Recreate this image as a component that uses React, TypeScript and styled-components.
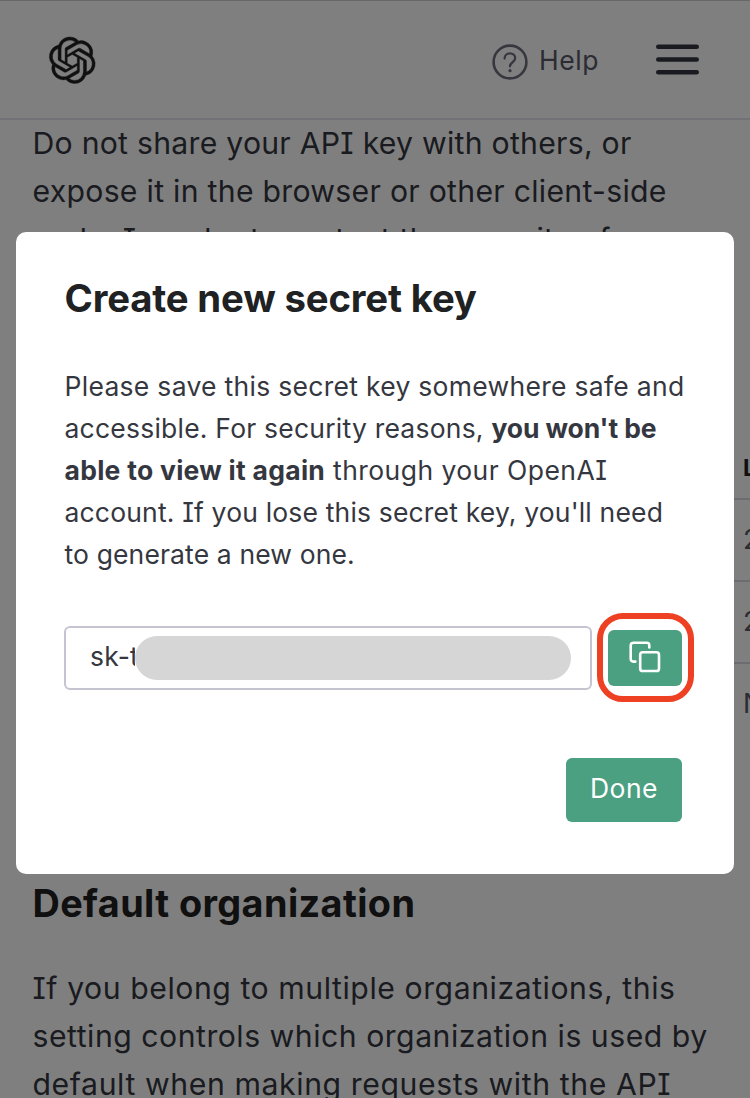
import React from "react";
import styled, { createGlobalStyle } from "styled-components";
import { SiOpenai } from "react-icons/si";

const GlobalStyle = createGlobalStyle`
  * { box-sizing: border-box; }
  body { margin: 0; background: #fff; }
`;

const Page = styled.div`
  position: relative;
  width: 750px;
  height: 1098px;
  overflow: hidden;
  background: #fff;
  color: #353740;
  font-family: Inter, "Liberation Sans", sans-serif;
  font-feature-settings: "cv08" 1;
`;

const Header = styled.header`
  display: flex;
  align-items: center;
  height: 120px;
  padding: 0 51px 0 48.5px;
  border-top: 1px solid #d0d0d4;
  border-bottom: 2px solid #e2e2ec;
`;

const Logo = styled(SiOpenai)`
  width: 46.5px;
  height: 46.5px;
  margin-top: 1px;
  color: #202123;
  stroke: #202123;
  stroke-width: 0.22px;
  overflow: visible;
`;

const HelpLink = styled.a`
  display: flex;
  align-items: center;
  gap: 11px;
  margin-left: auto;
  margin-right: 57px;
  color: #6e6e80;
  font-size: 26.5px;
  line-height: 36px;
`;

const HelpLabel = styled.span`
  color: #565869;
  letter-spacing: 0.55px;
`;

const HelpGlyph = styled.svg`
  margin-top: 4px;
`;

const Main = styled.main`
  padding: 0 0 0 32.5px;
`;

const Copy = styled.p`
  margin: -1px 0 0;
  font-size: 30.2px;
  line-height: 48px;
  color: #353740;
`;

const Line = styled.span<{ $track?: number }>`
  display: block;
  width: max-content;
  white-space: nowrap;
  letter-spacing: ${(p) => p.$track ?? 0}px;
`;

const Strong = styled.b<{ $track?: number }>`
  letter-spacing: ${(p) => p.$track ?? 0}px;
`;

const KeyTable = styled.div`
  display: grid;
  grid-auto-rows: 82px;
  height: 498px;
  margin: 155px 0 0;
  width: 900px;
`;

const KeyRow = styled.div<{ $head?: boolean }>`
  display: flex;
  align-items: center;
  justify-content: flex-end;
  border-bottom: 2px solid #d9d9e3;
  color: ${(p) => (p.$head ? "#202123" : "#565869")};
  font-size: ${(p) => (p.$head ? 23 : 27)}px;
  font-weight: ${(p) => (p.$head ? 700 : 400)};
  padding-top: ${(p) => (p.$head ? 19 : 0)}px;
  padding-bottom: ${(p) => (p.$head ? 0 : 1)}px;
  &:last-child { border-bottom: 0; padding-bottom: 3px; }
`;

const KeyCell = styled.span`
  width: 189.5px;
`;

const SectionTitle = styled.h2`
  margin: 0;
  font-size: 37.8px;
  line-height: 48px;
  font-weight: 700;
  color: #202123;
`;

const Section = styled.section`
  display: grid;
  gap: 38px;
  margin-top: -37px;
`;

const Overlay = styled.div`
  position: absolute;
  inset: 0;
  padding: 232px 16px 0;
  background: rgba(0, 0, 0, 0.5);
`;

const Dialog = styled.div`
  height: 642px;
  padding: 40px 48px 0 48.5px;
  border-radius: 10px;
  background: #fff;
`;

const DialogTitle = styled.h1`
  margin: 0 0 41px;
  font-size: 38.3px;
  line-height: 52px;
  font-weight: 700;
  color: #202123;
`;

const DialogText = styled.p`
  margin: 0;
  font-size: 26.5px;
  line-height: 42px;
  color: #353740;
`;

const KeyForm = styled.div`
  display: flex;
  align-items: center;
  gap: 5px;
  width: 630px;
  height: 90px;
  margin: 38px 0 0 -0.5px;
`;

const KeyField = styled.div`
  display: flex;
  align-items: center;
  width: 528px;
  height: 64px;
  padding-left: 24px;
  border: 2px solid #c5c5d2;
  border-radius: 6px;
  color: #353740;
  font-size: 26.5px;
`;

const KeyPrefix = styled.span`
  width: 45px;
  overflow: hidden;
  line-height: 36px;
  padding-bottom: 4px;
  letter-spacing: 0.2px;
  white-space: nowrap;
`;

const Redaction = styled.span`
  width: 436px;
  height: 44px;
  border-radius: 22px;
  background: #d6d6d6;
`;

const Highlight = styled.div`
  width: 97px;
  height: 89px;
  margin-bottom: 1px;
  padding: 11px 5px 10px;
  border: 6px solid #ee4023;
  border-radius: 26px;
`;

const CopyButton = styled.button`
  display: flex;
  align-items: center;
  justify-content: center;
  width: 74px;
  height: 56px;
  padding: 0 0 2px;
  border: 0;
  border-radius: 6px;
  background: #4aa081;
`;

const Actions = styled.div`
  display: flex;
  justify-content: flex-end;
  padding: 55px 4px 0 0;
`;

const DoneButton = styled.button`
  width: 116px;
  height: 64px;
  padding: 0 0 4px;
  border: 0;
  border-radius: 6px;
  background: #4aa081;
  color: #fff;
  font: 400 26.5px/36px Inter, "Liberation Sans", sans-serif;
  letter-spacing: 0.5px;
`;

const HelpIcon = () => (
  <HelpGlyph width="36" height="36" viewBox="0 0 36 36" fill="none" stroke="currentColor" strokeLinecap="round">
    <circle cx="18" cy="18" r="16.4" strokeWidth="2.6" />
    <path d="M12.6 14.6c0-3.2 2.3-5.2 5.3-5.2s5.3 1.9 5.3 4.7c0 2.3-1.3 3.3-2.9 4.4-1.5 1.1-2.3 1.9-2.3 3.8" strokeWidth="2.3" />
    <circle cx="18" cy="26.7" r="1.6" fill="currentColor" stroke="none" />
  </HelpGlyph>
);

const MenuIcon = () => (
  <svg width="43" height="31" viewBox="0 0 43 31" stroke="#353740" strokeWidth="4.6" strokeLinecap="round">
    <path d="M2.3 2.7H40.7M2.3 15.5H40.7M2.3 28.3H40.7" />
  </svg>
);

const CopyIcon = () => (
  <svg width="32" height="32" viewBox="0 0 32 32" fill="none" stroke="#fff" strokeWidth="2.6" strokeLinecap="round" strokeLinejoin="round">
    <rect x="11.2" y="11.2" width="18.8" height="18.8" rx="2.6" />
    <path d="M6.4 20.6H4.3a2.6 2.6 0 0 1-2.6-2.6V4.3a2.6 2.6 0 0 1 2.6-2.6h13.4a2.6 2.6 0 0 1 2.6 2.6v2.1" />
  </svg>
);

const rows = ["2023", "2023", "Never"];

export default function App() {
  return (
    <Page>
      <GlobalStyle />
      <Header>
        <Logo />
        <HelpLink>
          <HelpIcon />
          <HelpLabel>Help</HelpLabel>
        </HelpLink>
        <MenuIcon />
      </Header>
      <Main>
        <Copy>
          <Line $track={0.26}>Do not share your API key with others, or</Line>
          <Line $track={0.29}>expose it in the browser or other client-side</Line>
          <Line $track={0.29}>code. In order to protect the security of</Line>
        </Copy>
        <KeyTable>
          <KeyRow $head><KeyCell>LAST USED</KeyCell></KeyRow>
          {rows.map((r, i) => (
            <KeyRow key={i}><KeyCell>{r}</KeyCell></KeyRow>
          ))}
        </KeyTable>
        <Section>
          <SectionTitle><Line $track={0.4}>Default organization</Line></SectionTitle>
          <Copy>
            <Line $track={0.56}>If you belong to multiple organizations, this</Line>
            <Line $track={0.51}>setting controls which organization is used by</Line>
            <Line $track={0.6}>default when making requests with the API</Line>
          </Copy>
        </Section>
      </Main>
      <Overlay>
        <Dialog>
          <DialogTitle><Line $track={-0.16}>Create new secret key</Line></DialogTitle>
          <DialogText>
            <Line $track={0.29}>Please save this secret key somewhere safe and</Line>
            <Line $track={0.22}>accessible. For security reasons, <Strong $track={-0.1}>you won't be</Strong></Line>
            <Line $track={0.45}><Strong $track={0.27}>able to view it again</Strong> through your OpenAI</Line>
            <Line $track={0.17}>account. If you lose this secret key, you'll need</Line>
            <Line $track={0.13}>to generate a new one.</Line>
          </DialogText>
          <KeyForm>
            <KeyField>
              <KeyPrefix>sk-t</KeyPrefix>
              <Redaction />
            </KeyField>
            <Highlight>
              <CopyButton aria-label="Copy"><CopyIcon /></CopyButton>
            </Highlight>
          </KeyForm>
          <Actions>
            <DoneButton>Done</DoneButton>
          </Actions>
        </Dialog>
      </Overlay>
    </Page>
  );
}
